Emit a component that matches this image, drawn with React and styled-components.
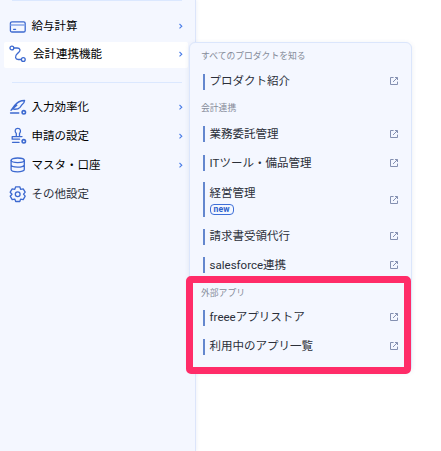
import React from 'react';
import styled, { createGlobalStyle } from 'styled-components';

const GlobalStyle = createGlobalStyle`
  * { box-sizing: border-box; }
  body { margin: 0; background: #fff; overflow: hidden; }
`;

const Page = styled.main`
  position: relative;
  width: 441px;
  height: 451px;
  overflow: hidden;
  background: #fff;
  font-family: Roboto, "Noto Sans CJK JP", sans-serif;
  color: #2b2f3a;
`;

const Sidebar = styled.nav`
  width: 196px;
  height: 100%;
  padding: 0 7px 0 4px;
  background: #f4f7ff;
  border-right: 1px solid #dce5fa;
  box-shadow: 1px 0 3px rgba(60, 90, 170, 0.08);
`;

const Divider = styled.hr`
  height: 1px;
  margin: 0 6px 0 8px;
  border: 0;
  background: #dbe8ff;
`;

const NavGroup = styled.div`
  display: flex;
  flex-direction: column;
  gap: ${({ $gap = 0 }) => $gap}px;
  padding-top: ${({ $top }) => $top}px;
  padding-bottom: ${({ $bottom = 0 }) => $bottom}px;
`;

const NavItem = styled.a`
  display: flex;
  align-items: center;
  width: 184px;
  height: ${({ $active }) => ($active ? 26 : 29)}px;
  padding: 0 4px ${({ $active }) => ($active ? 2 : 0)}px 5px;
  border-radius: 2px;
  background: ${({ $active }) => ($active ? '#fff' : 'transparent')};
  color: ${({ $muted }) => ($muted ? '#2c303a' : '#000')};
  font-size: 11.5px;
  line-height: 16px;
  white-space: nowrap;
`;

const NavLabel = styled.span`
  flex: 1;
  padding-left: ${({ $indent = 4.5 }) => $indent}px;
`;

const NavIcon = styled.svg`
  flex: none;
  width: 18px;
  height: 18px;
  fill: none;
  stroke: #3c69d0;
  stroke-width: 1.3;
  stroke-linecap: round;
  stroke-linejoin: round;
`;

const ChevronSvg = styled.svg`
  flex: none;
  width: 6px;
  height: 8px;
  fill: none;
  stroke: #4a7de8;
  stroke-width: 1.1;
`;

const Popup = styled.section`
  position: absolute;
  left: 189px;
  top: 42px;
  width: 223px;
  height: 330px;
  padding: 5px 13px 0 11px;
  border: 1px solid #dbe6fc;
  border-radius: 6px;
  background: #f4f7ff;
  box-shadow: 0 1px 5px rgba(60, 80, 140, 0.1);
`;

const Heading = styled.h2`
  height: 16px;
  margin: 0;
  font-size: 8.8px;
  font-weight: 400;
  line-height: 16px;
  color: #858b99;
`;

const LinkList = styled.div`
  display: flex;
  flex-direction: column;
  gap: 13px;
  padding: ${({ $top = 10 }) => $top}px 0 ${({ $bottom = 10 }) => $bottom}px 2px;
`;

const LinkGroup = styled.div`
  display: flex;
  flex-direction: column;
  gap: ${({ $gap }) => $gap}px;
  margin-top: ${({ $offset = 0 }) => $offset}px;
`;

const AppLink = styled.a`
  display: flex;
  align-items: center;
  height: ${({ $tall }) => ($tall ? 35 : 16)}px;
  padding: 0 0 ${({ $raised }) => ($raised ? 2 : 0)}px 4.6px;
  border-left: 2px solid #6487ce;
  font-size: 11.5px;
  line-height: 16px;
  white-space: nowrap;
`;

const LinkLabel = styled.span`
  display: flex;
  flex: 1;
  flex-direction: column;
  align-items: flex-start;
  gap: 3px;
`;

const Badge = styled.small`
  display: flex;
  align-items: center;
  justify-content: center;
  width: 24px;
  height: 11px;
  border: 1px solid #3e6fd8;
  border-radius: 4px;
  color: #2e62cd;
  font-size: 8.6px;
  font-weight: 700;
  letter-spacing: 0.2px;
  line-height: 9px;
`;

const ExternalSvg = styled.svg`
  flex: none;
  width: 8px;
  height: 8px;
  fill: none;
  stroke: #8490b1;
  stroke-width: 1;
  stroke-linejoin: round;
`;

const Highlight = styled.div`
  position: absolute;
  left: 186px;
  top: 276px;
  width: 225px;
  height: 98px;
  border: 7px solid #ff2c68;
  border-radius: 5px;
`;

const icons = {
  card: (
    <>
      <rect x="1.4" y="4.8" width="14.8" height="10.2" rx="1.6" />
      <path d="M2 8h13.600" strokeWidth="1.700" stroke="#86a5e8" />
      <path d="M4.600 12.300h2" />
    </>
  ),
  link: (
    <>
      <circle cx="2.900" cy="3" r="1.900" />
      <circle cx="14.300" cy="14.500" r="1.900" />
      <path d="M5 3h3.200c3 0 3.600 2.500 1.600 4.200L8.200 8.800C5.600 11.200 6.200 14.500 9.200 14.500h3" />
    </>
  ),
  pen: (
    <>
      <path d="M2 12.300 5.600 7.500C8.300 4 11.600 2.500 15.600 2.500 15.500 4.300 14.500 5.600 13 6.700L11 9.300C9.600 11 7.400 11.400 4.700 11.200M2 12.300 7.800 7.200M1.500 15h8.300" />
      <circle cx="14.800" cy="14.300" r="1.700" strokeWidth="1.600" />
    </>
  ),
  stamp: (
    <>
      <path d="M7.300 9.500V6.500C5.300 4.500 6 1.300 8.800 1.300S12.300 4.500 10.500 6.500v3M3.200 12.200V9.600h9.800M3.200 12.200h7.400M3.500 15.300h6.600" />
      <circle cx="14.800" cy="14.300" r="1.700" strokeWidth="1.600" />
    </>
  ),
  database: (
    <>
      <ellipse cx="8.700" cy="4.300" rx="6.600" ry="2.300" />
      <path d="M2.100 4.300v9.200c0 3.100 13.200 3.100 13.200 0V4.300M2.100 8.800c0 3.100 13.200 3.100 13.200 0" />
    </>
  ),
  gear: (
    <>
      <path d="M6.700 1.800h4.100l.8 2.500 2.600-.5 2 3.400L14.500 9.200l1.700 2-2 3.400-2.600-.5-.8 2.400H6.700l-.9-2.400-2.600.5-2-3.400 1.800-2-1.800-2 2-3.400 2.600.5Z" />
      <circle cx="8.700" cy="9.200" r="2.400" />
    </>
  ),
};

const Chevron = () => (
  <ChevronSvg viewBox="0 0 6 8"><path d="m1.500 2 2.300 2.200-2.300 2.200" /></ChevronSvg>
);

const ExternalIcon = () => (
  <ExternalSvg viewBox="0 0 8 8">
    <path d="M3.600.5H.5v7h7V4.600M5 .5h2.500V3M7.300.7 3 5" />
  </ExternalSvg>
);

function MenuItem({ icon, label, arrow = true, indent, ...props }) {
  return (
    <NavItem {...props}>
      <NavIcon viewBox="0 0 18 18">{icons[icon]}</NavIcon>
      <NavLabel $indent={indent}>{label}</NavLabel>
      {arrow && <Chevron />}
    </NavItem>
  );
}

function ProductLink({ label, badge, raised }) {
  return (
    <AppLink $tall={Boolean(badge)} $raised={raised}>
      <LinkLabel>{label}{badge && <Badge>{badge}</Badge>}</LinkLabel>
      <ExternalIcon />
    </AppLink>
  );
}

export default function App() {
  return (
    <>
      <GlobalStyle />
      <Page>
        <Sidebar>
          <Divider />
          <NavGroup $top={10} $bottom={14} $gap={2}>
            <MenuItem icon="card" label="給与計算" />
            <MenuItem icon="link" label="会計連携機能" indent={6} $active />
          </NavGroup>
          <Divider />
          <NavGroup $top={9}>
            <MenuItem icon="pen" label="入力効率化" />
            <MenuItem icon="stamp" label="申請の設定" />
            <MenuItem icon="database" label="マスタ・口座" />
            <MenuItem icon="gear" label="その他設定" arrow={false} $muted />
          </NavGroup>
        </Sidebar>
        <Popup>
          <Heading>すべてのプロダクトを知る</Heading>
          <LinkList>
            <ProductLink label="プロダクト紹介" raised />
          </LinkList>
          <Heading>会計連携</Heading>
          <LinkList $bottom={12}>
            <LinkGroup $gap={13}>
              <ProductLink label="業務委託管理" />
              <ProductLink label="ITツール・備品管理" />
            </LinkGroup>
            <LinkGroup $gap={12} $offset={-2}>
              <ProductLink label="経営管理" badge="new" />
              <ProductLink label="請求書受領代行" raised />
              <ProductLink label="salesforce連携" />
            </LinkGroup>
          </LinkList>
          <Heading>外部アプリ</Heading>
          <LinkList $top={9}>
            <ProductLink label="freeeアプリストア" raised />
            <ProductLink label="利用中のアプリ一覧" raised />
          </LinkList>
        </Popup>
        <Highlight />
      </Page>
    </>
  );
}
